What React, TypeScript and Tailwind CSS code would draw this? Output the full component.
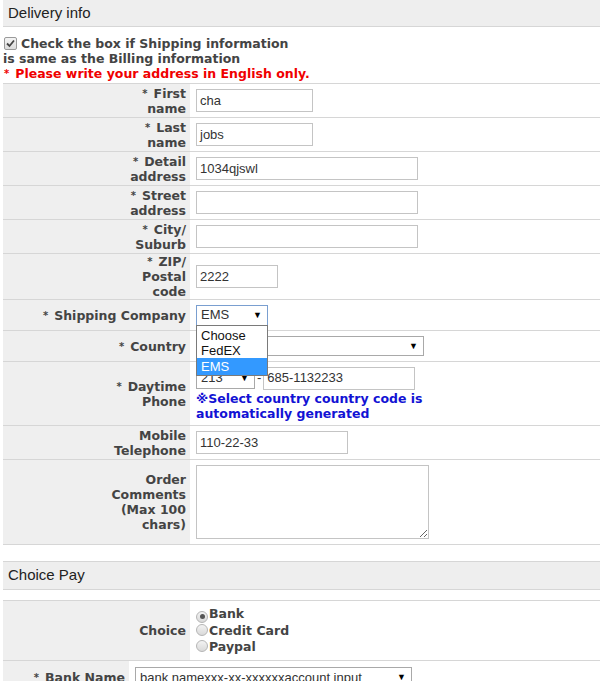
import React from "react";

const LBL = "font-['DejaVu_Sans',sans-serif] font-bold text-[12.5px] leading-[15px] text-[#444]";
const TXT = "font-['Liberation_Sans',Arial,sans-serif] text-[13px] text-[#333]";

function Row({ h, label, children, lw = "w-[187px]", pl = "pl-[6px]" }: { h: string; label: React.ReactNode; children?: React.ReactNode; lw?: string; pl?: string }) {
  return (
    <div className={`flex ${h} border-b border-[#d6d6d6]`}>
      <div className={`${lw} shrink-0 bg-[#efefef] flex items-center justify-end text-right pr-[4px] ${LBL}`}>
        <div>{label}</div>
      </div>
      <div className={`flex-1 flex items-center ${pl} relative`}>{children}</div>
    </div>
  );
}

function Input({ w, value }: { w: string; value?: string }) {
  return (
    <div className={`${w} h-[23px] border border-[#c4c4c4] bg-white flex items-center pl-[3px] ${TXT}`}>{value}</div>
  );
}

function Select({ w, value, h = "h-[21px]", border = "border-[#a9a9a9]" }: { w: string; value?: string; h?: string; border?: string }) {
  return (
    <div className={`${w} ${h} border ${border} bg-white flex items-center justify-between pl-[4px] pr-[5px] ${TXT} text-[#111]`}>
      <span>{value}</span>
      <span className="text-[9px] leading-none text-black">▼</span>
    </div>
  );
}

function Star() {
  return <span className="text-[10px] align-[1px] ml-[1px] mr-[6px]">*</span>;
}

function Radio({ checked }: { checked?: boolean }) {
  return (
    <span className="inline-flex w-[12px] h-[12px] rounded-full border border-[#b5b5b5] bg-gradient-to-b from-[#f3f3f3] to-[#d9d9d9] items-center justify-center mr-[1px] align-[-1px]">
      {checked && <span className="w-[5px] h-[5px] rounded-full bg-[#555]" />}
    </span>
  );
}

export default function App() {
  return (
    <div className="w-[600px] bg-white pl-[3px] overflow-hidden">
      {/* Delivery info header */}
      <div className="h-[27px] bg-[#eeeeee] border-b border-[#d6d6d6] flex items-center pl-[5px] font-['Liberation_Sans',Arial,sans-serif] text-[15px] text-[#222]">
        Delivery info
      </div>

      {/* checkbox */}
      <div className={`pt-[9px] pb-[2px] ${LBL}`}>
        <div className="flex items-start">
          <span className="w-[13px] h-[13px] mt-[1px] ml-[1px] mr-[4px] border border-[#9a9a9a] bg-gradient-to-b from-[#f4f4f4] to-[#dcdcdc] rounded-[2px] flex items-center justify-center shrink-0">
            <svg width="9" height="9" viewBox="0 0 9 9">
              <path d="M1 4.5 L3.5 7 L8 1.5" stroke="#444" strokeWidth="1.8" fill="none" />
            </svg>
          </span>
          <span>Check the box if Shipping information</span>
        </div>
        <div>is same as the Billing information</div>
        <div className="text-[#f00000]"><Star />Please write your address in English only.</div>
      </div>

      {/* table */}
      <div className="border-t border-[#d6d6d6]">
        <Row h="h-[34px]" label={<><Star />First<br />name</>}>
          <Input w="w-[117px]" value="cha" />
        </Row>
        <Row h="h-[34px]" label={<><Star />Last<br />name</>}>
          <Input w="w-[117px]" value="jobs" />
        </Row>
        <Row h="h-[34px]" label={<><Star />Detail<br />address</>}>
          <Input w="w-[222px]" value="1034qjswl" />
        </Row>
        <Row h="h-[34px]" label={<><Star />Street<br />address</>}>
          <Input w="w-[222px]" />
        </Row>
        <Row h="h-[34px]" label={<><Star />City/<br />Suburb</>}>
          <Input w="w-[222px]" />
        </Row>
        <Row h="h-[46px]" label={<><Star />ZIP/<br />Postal<br />code</>}>
          <Input w="w-[82px]" value="2222" />
        </Row>
        <Row h="h-[31px]" label={<><Star />Shipping Company</>}>
          <Select w="w-[72px]" value="EMS" border="border-[#7a9fd0]" />
        </Row>
        <Row h="h-[31px]" label={<><Star />Country</>}>
          <Select w="w-[228px]" h="h-[20px]" value="" />
        </Row>
        <Row h="h-[64px]" label={<><Star />Daytime<br />Phone</>}>
          <div className="flex flex-col">
            <div className="flex items-center">
              <Select w="w-[59px]" h="h-[22px]" value="213" />
              <span className={`${TXT} mx-[2px]`}>-</span>
              <Input w="w-[152px]" value="685-1132233" />
            </div>
            <div className="font-['DejaVu_Sans',sans-serif] font-bold text-[12.5px] leading-[15px] text-[#1212d4] mt-[1px]">
              ※Select country country code is<br />automatically generated
            </div>
          </div>
        </Row>
        <Row h="h-[34px]" label={<>Mobile<br />Telephone</>}>
          <Input w="w-[152px]" value="110-22-33" />
        </Row>
        <Row h="h-[85px]" label={<>Order<br />Comments<br />(Max 100<br />chars)</>}>
          <textarea readOnly className="w-[233px] h-[74px] border border-[#c4c4c4] bg-white block" />
        </Row>
      </div>

      {/* Choice Pay */}
      <div className="mt-[16px] h-[29px] bg-[#eeeeee] border-t border-b border-[#d6d6d6] flex items-center pl-[5px] font-['Liberation_Sans',Arial,sans-serif] text-[15px] text-[#222]">
        Choice Pay
      </div>

      <div className="mt-[10px] border-t border-[#d6d6d6]">
        <Row h="h-[60px]" label={<>Choice</>}>
          <div className={`${LBL} leading-[16px]`}>
            <div><Radio checked />Bank</div>
            <div><Radio />Credit Card</div>
            <div><Radio />Paypal</div>
          </div>
        </Row>
        <Row h="h-[34px]" lw="w-[126px]" label={<><Star />Bank Name</>}>
          <Select w="w-[277px]" h="h-[22px]" value="bank namexxx-xx-xxxxxxaccount input" />
        </Row>
      </div>

      {/* open dropdown list overlay */}
      <div className="absolute left-[196px] top-[325px] w-[72px] border border-[#7a7a7a] bg-white font-['Liberation_Sans',Arial,sans-serif] text-[13px] text-[#111] leading-[15px]">
        <div className="pl-[4px] pt-[2px]">Choose</div>
        <div className="pl-[4px]">FedEX</div>
        <div className="pl-[4px] bg-[#3399ff] text-white py-[1px]">EMS</div>
      </div>
    </div>
  );
}
